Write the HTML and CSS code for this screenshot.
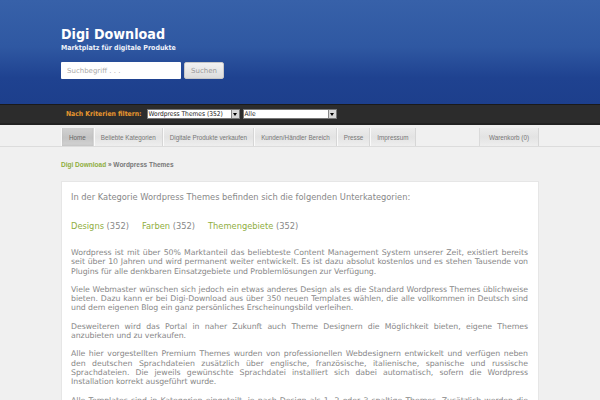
FILE: index.html
```html
<!DOCTYPE html>
<html lang="de">
<head>
<meta charset="utf-8">
<title>Digi Download</title>
<link rel="stylesheet" href="styles.css">
</head>
<body>
<header class="header">
  <div class="wrap">
    <h1 class="logo">Digi Download</h1>
    <p class="tagline">Marktplatz für digitale Produkte</p>
    <form class="search">
      <input class="search-input" type="text" placeholder="Suchbegriff . . .">
      <button class="search-btn" type="button">Suchen</button>
    </form>
  </div>
</header>
<div class="filterbar">
  <div class="wrap filter-inner">
    <span class="filter-label">Nach Kriterien filtern:</span>
    <div class="fake-select sel1"><span>Wordpress Themes (352)</span><i class="arrow"></i></div>
    <div class="fake-select sel2"><span>Alle</span><i class="arrow"></i></div>
  </div>
</div>
<nav class="navbar">
  <div class="wrap nav-inner">
    <ul class="tabs">
      <li class="tab active">Home</li>
      <li class="tab">Beliebte Kategorien</li>
      <li class="tab">Digitale Produkte verkaufen</li>
      <li class="tab">Kunden/Händler Bereich</li>
      <li class="tab">Presse</li>
      <li class="tab">Impressum</li>
    </ul>
    <ul class="tabs">
      <li class="tab cart">Warenkorb (0)</li>
    </ul>
  </div>
</nav>
<main class="wrap">
  <div class="crumbs"><a class="crumb-link">Digi Download</a> » Wordpress Themes</div>
  <section class="box">
    <p class="intro">In der Kategorie Wordpress Themes befinden sich die folgenden Unterkategorien:</p>
    <p class="subcats">
      <span class="sub"><a>Designs</a> (352)</span>
      <span class="sub"><a>Farben</a> (352)</span>
      <span class="sub"><a>Themengebiete</a> (352)</span>
    </p>
    <p class="para">Wordpress ist mit über 50% Marktanteil das beliebteste Content Management System unserer Zeit, existiert bereits seit über 10 Jahren und wird permanent weiter entwickelt. Es ist dazu absolut kostenlos und es stehen Tausende von Plugins für alle denkbaren Einsatzgebiete und Problemlösungen zur Verfügung.</p>
    <p class="para">Viele Webmaster wünschen sich jedoch ein etwas anderes Design als es die Standard Wordpress Themes üblichweise bieten. Dazu kann er bei Digi-Download aus über 350 neuen Templates wählen, die alle vollkommen in Deutsch sind und dem eigenen Blog ein ganz persönliches Erscheinungsbild verleihen.</p>
    <p class="para">Desweiteren wird das Portal in naher Zukunft auch Theme Designern die Möglichkeit bieten, eigene Themes anzubieten und zu verkaufen.</p>
    <p class="para">Alle hier vorgestellten Premium Themes wurden von professionellen Webdesignern entwickelt und verfügen neben den deutschen Sprachdateien zusätzlich über englische, französische, italienische, spanische und russische Sprachdateien. Die jeweils gewünschte Sprachdatei installiert sich dabei automatisch, sofern die Wordpress Installation korrekt ausgeführt wurde.</p>
    <p class="para">Alle Templates sind in Kategorien eingeteilt, je nach Design als 1, 2 oder 3 spaltige Themes. Zusätzlich werden die Themes nach Farben und Themengebieten sortiert.</p>
  </section>
</main>
</body>
</html>
```
FILE: styles.css
```css
* { box-sizing: border-box; }
html, body { margin: 0; padding: 0; }
body {
  background: #f0f0f0;
  font-family: "DejaVu Sans", Verdana, sans-serif;
  color: #777;
  overflow: hidden;
  height: 400px;
}
.wrap { width: 478px; margin-left: 61px; }

.header {
  height: 104px;
  background: linear-gradient(#3761a9 0%, #2f58a2 45%, #1f4290 75%, #1d3f8c 100%);
  padding-top: 25px;
}
.logo {
  margin: 0;
  font-family: "DejaVu Sans Condensed", "DejaVu Sans", sans-serif;
  font-size: 14.2px;
  line-height: 18px;
  font-weight: bold;
  color: #fff;
}
.tagline {
  margin: 0;
  font-family: "DejaVu Sans Condensed", "DejaVu Sans", sans-serif;
  font-size: 7px;
  font-weight: bold;
  color: #eef2fa;
  line-height: 10px;
}
.search { display: flex; gap: 3px; margin-top: 9px; }
.search-input {
  width: 120px; height: 17px;
  border: 0; border-radius: 1px;
  padding: 0 6px;
  font: 7px "DejaVu Sans", sans-serif;
  color: #999;
  background: #fff;
  outline: none;
}
.search-input::placeholder { color: #aaa; }
.search-btn {
  width: 40px; height: 17px;
  border: 1px solid #c8c8c8; border-radius: 2px;
  background: linear-gradient(#f2f2f2, #dcdcdc);
  font: 7px "DejaVu Sans", sans-serif;
  color: #999;
  padding: 0;
}

.filterbar {
  height: 21px;
  background: #2c2c2c;
  border-top: 1px solid #1a1a1a;
  border-bottom: 2px solid #222;
}
.filter-inner { display: flex; align-items: center; height: 100%; padding-left: 5px; gap: 4px; }
.filter-label {
  color: #e8962e;
  font-family: "DejaVu Sans Condensed", "DejaVu Sans", sans-serif;
  font-size: 6.8px; font-weight: bold; margin-right: 1px;
  white-space: nowrap;
}
.fake-select {
  height: 10px; background: #fff; border: 1px solid #777;
  display: flex; align-items: center; justify-content: space-between;
  font: 6.6px "DejaVu Sans Condensed", "DejaVu Sans", sans-serif; color: #222;
  padding-left: 1px;
  white-space: nowrap;
  overflow: hidden;
}
.sel1 { width: 93px; }
.sel2 { width: 94px; margin-left: -1px; }
.arrow {
  flex: none;
  width: 8px; height: 8px; background: #d8d8d8;
  border-left: 1px solid #888;
  position: relative;
}
.arrow::after {
  content: ""; position: absolute; left: 1px; top: 2.5px;
  border-left: 2.5px solid transparent; border-right: 2.5px solid transparent;
  border-top: 3px solid #000;
}

.navbar {
  height: 22px;
  background: #f0f0f0;
  border-bottom: 1px solid #dcdcdc;
  padding-top: 3px;
}
.nav-inner { display: flex; justify-content: space-between; height: 100%; }
.tabs { list-style: none; margin: 0; padding: 0; display: flex; height: 100%; }
.tab {
  height: 100%;
  display: flex; align-items: center;
  padding: 0 6px;
  font: 6.3px "Liberation Sans", Arial, sans-serif;
  color: #777;
  background: linear-gradient(#ececec, #e3e3e3 50%, #eeeeee);
  border-right: 1px solid #d6d6d6;
  border-left: 1px solid #fafafa;
  white-space: nowrap;
}
.tab.active {
  background: linear-gradient(#d2d2d2, #c4c4c4 55%, #d4d4d4);
  color: #666;
  padding: 0 7px;
  box-shadow: inset 0 -1px 2px rgba(0,0,0,0.08);
}
.tab.cart { padding: 0 9px; border-left: 1px solid #dadada; }

.crumbs {
  margin-top: 13px;
  font-family: "Liberation Sans", Arial, sans-serif;
  font-size: 6.5px;
  font-weight: bold;
  color: #777;
  line-height: 9px;
}
.crumb-link { color: #8fae3e; font-weight: bold; }

.box {
  margin-top: 12px;
  background: #fff;
  border: 1px solid #e6e6e6;
  padding: 10px 10px 10px 9px;
  min-height: 300px;
}
.box p { margin: 0; }
.intro { font-size: 8.3px; line-height: 11px; color: #888; }
.subcats { margin-top: 18px !important; font-size: 8.3px; line-height: 11px; color: #888; display: flex; gap: 13px; }
.sub a { color: #8fae3e; }
.para {
  font-size: 7.8px;
  line-height: 9.3px;
  letter-spacing: -0.05px;
  color: #888;
  text-align: justify;
  margin-top: 9px !important;
}
.subcats + .para { margin-top: 16px !important; }
```
